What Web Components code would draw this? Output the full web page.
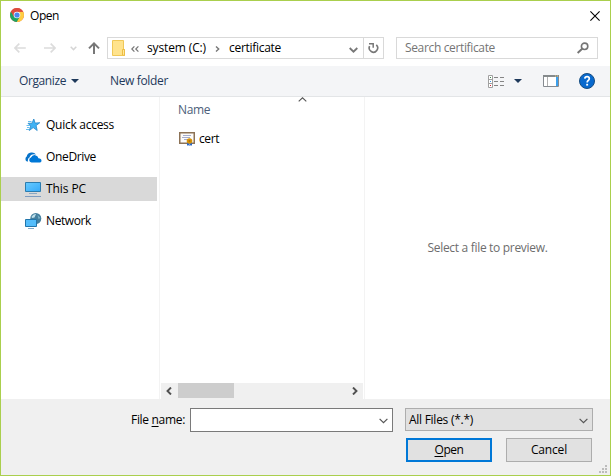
<!DOCTYPE html>
<html lang="en"><head><meta charset="utf-8"><title>Open</title>
<style>
html,body{margin:0;padding:0}
body{width:611px;height:476px;overflow:hidden;font:12px/16px "Open Sans","Noto Sans",sans-serif;color:#000}
</style></head><body>
<open-dialog></open-dialog>
<script>
const define=(name,html,after)=>customElements.define(name,class extends HTMLElement{
  connectedCallback(){
    if(this.shadowRoot)return;
    const t=document.createElement('template');t.innerHTML=html;
    this.attachShadow({mode:'open'}).append(t.content.cloneNode(true));
    if(after)after(this);
  }
});

/* Label whose tracking is tuned so that the text takes the given width. */
define('ui-label','<style>:host{display:block;white-space:pre;flex:none}span{display:inline-block}</style><span><slot></slot></span>',el=>{
  const w=+el.getAttribute('w'),s=el.shadowRoot.querySelector('span');
  const n=el.textContent.length;
  s.style.letterSpacing=((w-s.getBoundingClientRect().width)/n).toFixed(3)+'px';
  el.style.width=w+'px';
});

const icons={
chrome:['0 0 14 14',14,14,`<circle cx="7" cy="7" r="7" fill="#dd4b3e"/><path d="M.9 3.6A7 7 0 0 0 7 14L10 8.700 7 7 4 8.700Z" fill="#1da462"/><path d="M7 3.800H13.200A7 7 0 0 1 6.800 14L10 8.500Z" fill="#ffcd42"/><path d="M1 3.500A7 7 0 0 1 13.200 3.800H7L4 8.500Z" fill="#dd4b3e"/><circle cx="7" cy="7" r="3.300" fill="#f4f6ff"/><circle cx="7" cy="7" r="2.600" fill="#4b87ee"/>`],
close:['0 0 10 10',10,10,'<path d="M.4.4 9.600 9.600M9.600.4.4 9.600" stroke="#000" stroke-width="1.100"/>'],
back:['0 0 12 10',12,10,'<path d="M11.800 5H1M5.300.7 1 5l4.300 4.300" fill="none" stroke="#dcdcdc" stroke-width="1.700"/>'],
fwd:['0 0 12 10',12,10,'<path d="M0 5H11M6.700.7 11 5 6.700 9.300" fill="none" stroke="#dcdcdc" stroke-width="1.700"/>'],
recent:['0 0 7 5',7,5,'<path d="M.7.8 3.500 3.600 6.300.8" fill="none" stroke="#d5d5d5" stroke-width="1.500"/>'],
up:['0 0 12 12',12,12,'<path d="M6 12V1.500M1 6.400 6 1.400 11 6.400" fill="none" stroke="#777" stroke-width="2"/>'],
folder:['0 0 13 16',13,16,'<path d="M.5.5H11.500V9.500H12.500V15.500H.5Z" fill="#ffe38d" stroke="#f0c858"/><path d="M10.500 15V9.500H12.500V15.500Z" fill="#ffe89c" stroke="#edbd43"/>'],
dbl:['0 0 8 6',8,6,'<path d="M3.400.4.800 3l2.600 2.600M7.400.4 4.800 3l2.600 2.600" fill="none" stroke="#777" stroke-width="1.200"/>'],
crumb:['0 0 5 6',5,6,'<path d="M1 .5 3.700 3 1 5.500" fill="none" stroke="#777" stroke-width="1.400"/>'],
down:['0 0 9 6',9,6,'<path d="M.7 1 4.500 4.700 8.300 1" fill="none" stroke="#777" stroke-width="1.800"/>'],
refresh:['0 0 11 12',11,12,'<path d="M8.300 2.900A4.200 4.200 0 1 1 1.600 4.200" fill="none" stroke="#777" stroke-width="1.600"/><path d="M1 1.800H5.200V5.800" fill="none" stroke="#777" stroke-width="1.500"/>'],
search:['0 0 12 12',12,12,'<circle cx="7.600" cy="4.300" r="3.200" fill="none" stroke="#757575" stroke-width="1.600"/><path d="M5.200 6.700.6 11" stroke="#757575" stroke-width="2"/>'],
tri:['0 0 8 4',8,4,'<path d="M0 0H8L4 4Z" fill="#1e395b"/>'],
view:['0 0 17 13',17,13,'<path d="M.5.5H4.500V12.500H.5ZM.5 4.500H4.500M.5 8.500H4.500" fill="#fff" stroke="#a0a0a0"/><path d="M2 2h1v1H2z" fill="#398a48"/><path d="M2 6h1v1H2z" fill="#3997e3"/><path d="M2 10h1v1H2z" fill="#d52435"/><path d="M6 2.500h4M12 2.500h4M6 6.500h4M12 6.500h4M6 10.500h4M12 10.500h4" stroke="#858585"/>'],
pane:['0 0 16 12',16,12,'<path d="M.5.5H15.500V11.500H.5Z" fill="#fff" stroke="#858a90"/><path d="M0 0H16V2H0Z" fill="#858a8c"/><path d="M4.500 2V11" stroke="#b0b0b0"/><path d="M13 2H15V11H13Z" fill="#3ba0ed"/><path d="M12 1h1M14 1h1" stroke="#e2cc86"/>'],
help:['0 0 16 16',16,16,'<circle cx="8" cy="8" r="7.500" fill="#0869ce" stroke="#174d82"/><path d="M5.800 5.700Q6 3.700 8.100 3.700T10.300 5.600Q10.300 6.700 9.200 7.500T8.200 9.500" fill="none" stroke="#fff" stroke-width="1.700"/><path d="M7.200 10.800h1.900v1.800H7.200z" fill="#fff"/>'],
quick:['0 0 16 14',16,14,'<path d="M8.800 1 10.100 5.100 14.800 4.700 11.100 7.600 12.200 12.500 8.200 9.600 4.300 12.500 5.700 8 3 5.300 7 5.200Z" fill="#3fb2f4" stroke="#2586c9" stroke-width=".8"/><path d="M3 3.500H6.500M1.500 7.500H5M2 9.500H4.500M1 11.500H4" stroke="#68bff0"/>'],
cloud:['0 0 17 11',17,11,'<path d="M3 9.600H2A3 3 0 0 1 1.700 4.500 4.800 4.800 0 0 1 6 .5 5.200 5.200 0 0 1 11 2.400Q5.500 1.400 4.500 5.600 2.400 6.500 3 9.600Z" fill="#0873c9"/><path d="M6.500 10.500A2.500 2.500 0 0 1 6 5.600Q7.700 2.100 10.900 3.400 13 4.100 13.400 6.300 16.500 6.700 16.500 8.800T14.300 10.500Z" fill="#0078d7"/>'],
pc:['0 0 16 15',16,15,'<defs><linearGradient id="g" x2="1" y2="1"><stop stop-color="#67cbff"/><stop offset="1" stop-color="#35a9f8"/></linearGradient></defs><path d="M.5.500H15.500V9.500H.500Z" fill="url(#g)" stroke="#2c7cae"/><path d="M4 11.500H12" stroke="#8aa8c4"/><path d="M0 14.500H16" stroke="#7e9cc0"/>'],
net:['0 0 17 16',17,16,'<circle cx="10.800" cy="5.500" r="5.500" fill="#447f9e"/><path d="M6.500 3.800Q8.500.6 11 1L9.500 4.500 7 5Z" fill="#bfe0eb"/><path d="M12.500 2 15.500 5 13.500 6Z" fill="#79b4cc"/><path d="M.5 6.500H11.500V13.500H.5Z" fill="#53bdfb" stroke="#2275aa"/><path d="M3 15.500H9" stroke="#82aac7"/>'],
cert:['0 0 16 14',16,14,'<path d="M.75.75H15.250V11.250H.75Z" fill="#fcfbf9" stroke="#8c7256" stroke-width="1.500"/><path d="M4 3.500H12M3 5.500H11M5 7.500H9" stroke="#a4acce"/><path d="M8 9H10.400V14L9 13 8 14ZM10.800 9H13V14L12 13 10.800 14Z" fill="#2b67c5"/><circle cx="10.500" cy="9" r="2.800" fill="#d79308"/><circle cx="10.500" cy="9" r="1" fill="#b76f00"/>'],
sort:['0 0 9 5',9,5,'<path d="M.7 4.400 4.500.8 8.300 4.400" fill="none" stroke="#555" stroke-width="1.100"/>'],
left:['0 0 6 8',6,8,'<path d="M5 .5 1.500 4 5 7.500" fill="none" stroke="#505050" stroke-width="1.900"/>'],
right:['0 0 6 8',6,8,'<path d="M1 .5 4.500 4 1 7.500" fill="none" stroke="#505050" stroke-width="1.900"/>'],
thin:['0 0 9 6',9,6,'<path d="M.6.8 4.500 4.700 8.400.8" fill="none" stroke="#555" stroke-width="1.200"/>'],
grip:['0 0 8 8',8,8,'<path d="M6 0h2v2H6zM3 3h2v2H3zM6 3h2v2H6zM0 6h2v2H0zM3 6h2v2H3zM6 6h2v2H6z" fill="#bcbcbc"/>']
};
define('ui-icon','<style>:host{display:block;flex:none}svg{display:block}</style>',el=>{
  const [vb,w,h,body]=icons[el.getAttribute('name')];
  el.shadowRoot.innerHTML+=`<svg viewBox="${vb}" width="${w}" height="${h}">${body}</svg>`;
});

define('title-bar',`<style>:host{display:flex;height:30px;box-sizing:border-box;padding:0 10px 0 9px;align-items:center}ui-label{margin-left:6px}.x{margin-left:auto;margin-top:-1px}</style>
<ui-icon name="chrome" style="margin-top:-2px"></ui-icon><ui-label w="29">Open</ui-label><ui-icon class="x" name="close"></ui-icon>`);

define('nav-bar',`<style>:host{display:flex;height:35px;box-sizing:border-box;padding:6px 12px 7px 13px;align-items:center}
.box{display:flex;flex:none;align-items:center;box-sizing:border-box;height:22px;border:1px solid #d9d9d9}
.addr{width:277px;margin-left:7px;padding-left:4px}.re{width:20px;height:20px;box-sizing:border-box;border-left:1px solid #d9d9d9;display:flex;align-items:center;justify-content:center}
.search{width:202px;margin-left:12px;padding:0 8px;color:#757575;justify-content:space-between}</style>
<ui-icon name="back"></ui-icon><ui-icon name="fwd" style="margin-left:18px"></ui-icon><ui-icon name="recent" style="margin-left:14px"></ui-icon><ui-icon name="up" style="margin-left:11px"></ui-icon>
<div class="box addr"><ui-icon name="folder"></ui-icon><ui-icon name="dbl" style="margin:2px 0 0 6px"></ui-icon><ui-label w="59" style="margin-left:8px">system (C:)</ui-label><ui-icon name="crumb" style="margin:1px 0 0 9px"></ui-icon><ui-label w="52" style="margin-left:9px">certificate</ui-label><ui-icon name="down" style="margin:3px 5px 0 auto"></ui-icon><div class="re"><ui-icon name="refresh"></ui-icon></div></div>
<div class="box search"><ui-label w="90">Search certificate</ui-label><ui-icon name="search"></ui-icon></div>`);

define('tool-bar',`<style>:host{display:flex;height:31px;box-sizing:border-box;border-bottom:1px solid #e3e5e7;background:#f4f5f7;align-items:center;padding:0 15px 0 18px;color:#1e395b}</style>
<ui-label w="47">Organize</ui-label><ui-icon name="tri" style="margin-left:5px"></ui-icon><ui-label w="58" style="margin-left:31px">New folder</ui-label>
<ui-icon name="view" style="margin-left:auto"></ui-icon><ui-icon name="tri" style="margin-left:9px"></ui-icon><ui-icon name="pane" style="margin-left:21px"></ui-icon><ui-icon name="help" style="margin-left:20px"></ui-icon>`);

define('nav-item',`<style>:host{display:flex;width:156px;height:24px;align-items:center}:host([selected]){background:#d9d9d9}.i{width:45px;box-sizing:border-box;padding-left:24px;flex:none}</style>
<div class="i"></div><slot></slot>`,el=>{el.shadowRoot.querySelector('.i').innerHTML=`<ui-icon name="${el.getAttribute('icon')}"></ui-icon>`});

define('side-nav',`<style>:host{display:flex;flex-direction:column;gap:8px;width:159px;box-sizing:border-box;padding-top:16px;border-right:1px solid #f3f3f3}</style>
<nav-item icon="quick"><ui-label w="68">Quick access</ui-label></nav-item><nav-item icon="cloud"><ui-label w="50">OneDrive</ui-label></nav-item><nav-item icon="pc" selected><ui-label w="40">This PC</ui-label></nav-item><nav-item icon="net"><ui-label w="45">Network</ui-label></nav-item>`);

define('scroll-bar',`<style>:host{display:flex;height:16px;background:#f0f0f0;align-items:center;margin:0 1px;padding:0 5px;justify-content:space-between}.t{width:56px;height:15px;background:#cdcdcd;align-self:flex-start;margin:0 auto 0 6px}</style>
<ui-icon name="left"></ui-icon><div class="t"></div><ui-icon name="right"></ui-icon>`);

define('file-list',`<style>:host{display:flex;flex-direction:column;width:205px;box-sizing:border-box;border-right:1px solid #f3f3f3}
.head{display:grid;grid-template-columns:138px 1fr;height:26px;color:#4c607a}.head ui-label{margin:5px 0 0 18px}.row{display:flex;align-items:center;height:32px;padding-left:19px;gap:4px}scroll-bar{margin-top:auto}</style>
<div class="head"><ui-label w="32">Name</ui-label><ui-icon name="sort"></ui-icon></div><div class="row"><ui-icon name="cert"></ui-icon><ui-label w="20">cert</ui-label></div><scroll-bar></scroll-bar>`);

define('preview-pane',`<style>:host{display:flex;flex:1;align-items:center;justify-content:center;color:#6d6d6d}</style><ui-label w="120">Select a file to preview.</ui-label>`);

define('push-button',`<style>:host{display:flex;box-sizing:border-box;width:86px;height:24px;border:1px solid #adadad;background:#e1e1e1;align-items:center;justify-content:center}:host([primary]){border:2px solid #0078d7}</style><slot></slot>`);

define('combo-box',`<style>:host{display:flex;box-sizing:border-box;align-items:center;justify-content:space-between;background:#fff;border:1px solid #7a7a7a;width:203px;height:24px;padding:0 4px}:host([flat]){background:#e1e1e1;border-color:#adadad;width:188px;height:23px;padding:0 4px 0 3px}ui-icon{margin:2px 0 0 auto}</style><slot></slot><ui-icon name="thin"></ui-icon>`);

define('dialog-footer',`<style>:host{display:flex;flex-direction:column;height:76px;box-sizing:border-box;background:#f0f0f0;padding:9px 17px 0 130px;position:relative}
.r{display:flex;height:24px;align-items:flex-start}.r>ui-label{margin:4px 5px 0 0}u{text-underline-offset:1.500px;text-decoration-thickness:1px}.b{display:flex;gap:14px;justify-content:flex-end;margin:6px 1px 0}.g{position:absolute;right:3px;bottom:2px}</style>
<div class="r"><ui-label w="54">File <u>n</u>ame:</ui-label><combo-box></combo-box><combo-box flat style="margin-left:12px"><ui-label w="64">All Files (*.*)</ui-label></combo-box></div>
<div class="b"><push-button primary><ui-label w="29"><u>O</u>pen</ui-label></push-button><push-button><ui-label w="36">Cancel</ui-label></push-button></div><ui-icon class="g" name="grip"></ui-icon>`);

define('open-dialog',`<style>:host{display:flex;flex-direction:column;box-sizing:border-box;width:611px;height:476px;border:1px solid #aacf4d;background:#fff}.m{display:flex;flex:1;min-height:0}</style>
<title-bar></title-bar><nav-bar></nav-bar><tool-bar></tool-bar><div class="m"><side-nav></side-nav><file-list></file-list><preview-pane></preview-pane></div><dialog-footer></dialog-footer>`);
</script></body></html>
